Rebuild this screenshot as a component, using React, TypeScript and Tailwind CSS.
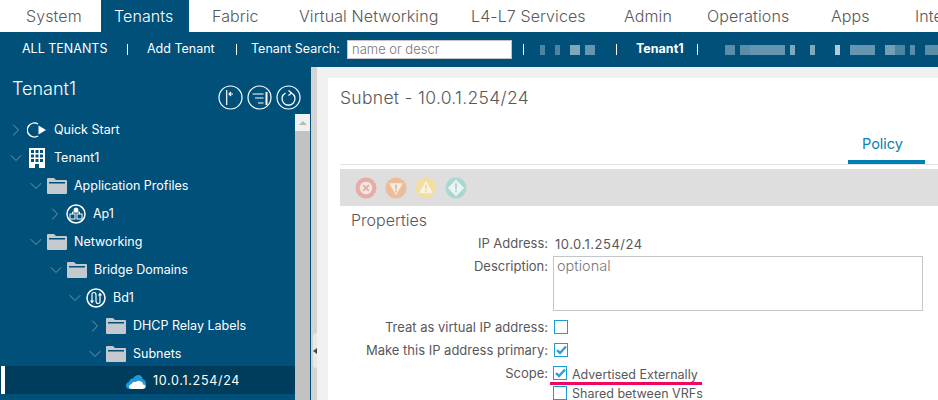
import { ChevronDown, ChevronRight } from 'lucide-react';
import type { ReactNode } from 'react';

const NAV = [
  { label: 'System', w: 'w-[101px] pl-[26px]' },
  { label: 'Tenants', w: 'w-[88px] pl-[13px]', active: true },
  { label: 'Fabric', w: 'w-[110px] pl-[23px]' },
  { label: 'Virtual Networking', w: 'w-[172px]' },
  { label: 'L4-L7 Services', w: 'w-[153px]' },
  { label: 'Admin', w: 'w-[83px]' },
  { label: 'Operations', w: 'w-[124px]' },
  { label: 'Apps', w: 'w-[84px]' },
  { label: 'Integrations', w: 'w-[100px]' },
];

const BLUR_A = [
  [5, 0.3], [10, 0], [5, 0.3], [10, 0], [10, 0.5], [5, 0], [10, 0.4],
];
const BLUR_B = [
  [10, 0.35], [5, 0], [10, 0.35], [15, 0.4], [20, 0.4], [5, 0], [5, 0.5], [15, 0], [5, 0.5], [20, 0], [5, 0.7], [10, 0], [25, 0.4], [10, 0], [10, 0.45], [10, 0.3], [5, 0], [5, 0.35], [10, 0], [13, 0.35],
];

function Blur({ cells }: { cells: number[][] }) {
  return (
    <div className="flex h-[10px] items-stretch">
      {cells.map(([w, o], i) => (
        <div key={i} className="shrink-0 bg-white" style={{ width: w, opacity: o }} />
      ))}
    </div>
  );
}

function Folder() {
  return (
    <svg width="20" height="16" viewBox="0 0 20 16" className="shrink-0">
      <path d="M0 2 V1 Q0 0 1 0 H7 L9 2 H19 Q20 2 20 3 V15 Q20 16 19 16 H1 Q0 16 0 15 Z" fill="#c4c9cd" />
      <rect x="2" y="4" width="16" height="1.5" fill="#00507a" />
    </svg>
  );
}

function Row({ indent, open, icon, label, selected }: { indent: number; open?: boolean; icon: ReactNode; label: string; selected?: boolean }) {
  return (
    <div className={`flex h-[28px] items-center ${selected ? '-mt-[2px] bg-[#003d5c] pt-[3px]' : ''}`} style={{ paddingLeft: selected ? 1 : indent }}>
      {selected && <span className="-mt-[3px] mr-[103px] h-[28px] w-[4px] shrink-0 bg-white" />}
      <span className="flex w-[14px] shrink-0 justify-center text-[#8aa5b5]">
        {open === undefined ? null : open ? <ChevronDown size={20} strokeWidth={1} className="shrink-0" /> : <ChevronRight size={20} strokeWidth={1} className="shrink-0" />}
      </span>
      <span className="ml-[4px] flex w-[20px] shrink-0 items-center justify-center">{icon}</span>
      <span className={`ml-[7px] whitespace-nowrap text-[12.5px] text-white ${selected ? 'tracking-[0.7px]' : ''}`}>{label}</span>
    </div>
  );
}

function CircleBtn({ children }: { children: ReactNode }) {
  return (
    <svg width="25" height="25" viewBox="0 0 25 25" fill="none" stroke="white" strokeWidth="1.2">
      <circle cx="12.5" cy="12.5" r="11.5" />
      {children}
    </svg>
  );
}

function Box({ checked, className = '' }: { checked?: boolean; className?: string }) {
  return (
    <span className={`flex h-[14px] w-[14px] shrink-0 items-center justify-center border-[1.5px] border-[#1a9cd8] bg-white ${className}`}>
      {checked && (
        <svg width="11" height="10" viewBox="0 0 11 10" fill="none">
          <path d="M1 5.2 L4 8 L10 1.5" stroke="#2f9fd8" strokeWidth="2.4" />
        </svg>
      )}
    </span>
  );
}

function Field({ label, children, className = 'h-[23px] items-center', labelClass = '' }: { label: string; children?: ReactNode; className?: string; labelClass?: string }) {
  return (
    <div className={`flex ${className}`}>
      <div className={`w-[208px] shrink-0 text-right text-[13px] leading-[14px] text-[#58585b] ${labelClass}`}>{label}</div>
      <div className="ml-[5px] flex-1">{children}</div>
    </div>
  );
}

export default function App() {
  return (
    <div className="flex h-[400px] w-[938px] flex-col overflow-hidden bg-white font-['Inter','Liberation_Sans',sans-serif]">
      {/* Top nav */}
      <div className="flex h-[32px] shrink-0 text-[16px] font-light tracking-[0.1px] text-[#58585b]">
        {NAV.map(n => (
          <div key={n.label} className={`flex shrink-0 items-center whitespace-nowrap ${n.w} ${n.active ? 'bg-[#00507a] text-white' : ''}`}>
            {n.label}
          </div>
        ))}
      </div>

      {/* Sub nav */}
      <div className="flex h-[35px] shrink-0 items-center overflow-hidden whitespace-nowrap bg-[#00507a] pl-[22px] text-[12.5px] text-white">
        <span className="w-[85px] shrink-0">ALL TENANTS</span>
        <span className="ml-[20px] h-[11px] w-px shrink-0 bg-white" />
        <span className="ml-[19px] w-[69px] shrink-0">Add Tenant</span>
        <span className="ml-[20px] h-[11px] w-px shrink-0 bg-white" />
        <span className="ml-[14px] w-[89px] shrink-0">Tenant Search:</span>
        <div className="ml-[7px] flex h-[19px] w-[165px] shrink-0 items-center border border-[#c5c5c5] bg-white px-1 text-[13px] font-light text-[#77787b]">name or descr</div>
        <span className="ml-[11px] h-[11px] w-px shrink-0 bg-white" />
        <div className="ml-[16px]"><Blur cells={BLUR_A} /></div>
        <span className="ml-[21px] h-[11px] w-px shrink-0 bg-white" />
        <span className="ml-[19px] w-[50px] shrink-0 font-bold">Tenant1</span>
        <span className="ml-[11px] h-[11px] w-px shrink-0 bg-white" />
        <div className="ml-[27px]"><Blur cells={BLUR_B} /></div>
      </div>

      <div className="flex min-h-0 flex-1">
        {/* Sidebar */}
        <div className="flex w-[311px] shrink-0 flex-col bg-[#00507a]">
          <div className="flex h-[47px] shrink-0 items-start justify-between pr-[10px] pl-[12px]">
            <span className="mt-[8px] text-[18px] font-light text-white">Tenant1</span>
            <div className="mt-[18px] flex gap-[4px]">
              <CircleBtn><path d="M8.7 5 V20 M11 9 H15 M13 7 L11 9 L13 11" /></CircleBtn>
              <CircleBtn><path d="M5.5 9 H16.5 M8 13 H16.5 M11 18 H16.5" /><path d="M19.5 7 V20" strokeWidth="2" /></CircleBtn>
              <CircleBtn><path d="M15.5 8 A6.5 6.5 0 1 1 9.5 8 M12.5 5.5 L15.5 8 L12.5 10.5" strokeWidth="1.3" /></CircleBtn>
            </div>
          </div>
          <div className="flex min-h-0 flex-1">
            <div className="w-[295px] shrink-0 pt-[2px]">
              <Row indent={9} open={false} label="Quick Start" icon={
                <svg width="20" height="18" viewBox="0 0 20 18" fill="none"><path d="M11 3 A7 7 0 1 0 11 15" stroke="white" strokeWidth="1.4" /><path d="M11.5 4.5 L19 9 L11.5 13.5 Z" fill="white" /></svg>
              } />
              <Row indent={9} open label="Tenant1" icon={
                <svg width="18" height="20" viewBox="0 0 18 20" fill="white"><path fillRule="evenodd" d="M1 0 H17 V20 H11 V16 H7 V20 H1 Z M3 2 V5 H6 V2 Z M7.5 2 V5 H10.5 V2 Z M12 2 V5 H15 V2 Z M3 6.5 V9.5 H6 V6.5 Z M7.5 6.5 V9.5 H10.5 V6.5 Z M12 6.5 V9.5 H15 V6.5 Z M3 11 V14 H6 V11 Z M7.5 11 V14 H10.5 V11 Z M12 11 V14 H15 V11 Z" /></svg>
              } />
              <Row indent={29} open label="Application Profiles" icon={<Folder />} />
              <Row indent={48} open={false} label="Ap1" icon={
                <svg width="20" height="20" viewBox="0 0 20 20" fill="none" stroke="white" strokeWidth="1"><circle cx="10" cy="10" r="9" strokeWidth="1.5" /><circle cx="10" cy="6" r="2" fill="white" /><rect x="4" y="10" width="5" height="5" /><rect x="11" y="10" width="5" height="5" /><path d="M6.5 10 V8 H13.5 V10" /></svg>
              } />
              <Row indent={29} open label="Networking" icon={<Folder />} />
              <Row indent={49} open label="Bridge Domains" icon={<Folder />} />
              <Row indent={68} open label="Bd1" icon={
                <svg width="20" height="20" viewBox="0 0 20 20" fill="none" stroke="white" strokeWidth="1.2"><circle cx="10" cy="10" r="9" strokeWidth="1.5" /><path d="M6 6 V14 M4.5 12.5 L6 14.5 L7.5 12.5 M6 6 Q6 4.5 8 4.5 Q10 4.5 10 7 V13 Q10 15.5 12 15.5 Q14 15.5 14 14 V6 M12.5 7.5 L14 5.5 L15.5 7.5" /></svg>
              } />
              <Row indent={88} open={false} label="DHCP Relay Labels" icon={<Folder />} />
              <Row indent={88} open label="Subnets" icon={<Folder />} />
              <Row indent={108} selected label="10.0.1.254/24" icon={
                <svg width="20" height="14" viewBox="0 0 20 14"><path d="M4 14 Q0 14 0 10.5 Q0 8 3 7 Q4 3 7 3.5 Q9 0 12.5 0 Q16 0 16.5 4 Q20 5 20 9 V11 Q20 14 16 14 Z" fill="#1e9ad6" /><path d="M5.5 14 Q3 14 3 11.5 Q3 9.5 5.5 9 Q7 6 10 7 Q12 5 15 6.5 Q17 7 17 9.5 Q20 10 19.5 12 Q19 14 16 14 Z" fill="white" /></svg>
              } />
            </div>
            {/* Scrollbar */}
            <div className="flex w-[15px] shrink-0 flex-col bg-[#c2c2c2]">
              <div className="flex h-[17px] items-center justify-center bg-[#f1f1f1]">
                <span className="h-0 w-0 border-x-[4px] border-b-[4px] border-x-transparent border-b-[#b8b8b8]" />
              </div>
            </div>
          </div>
        </div>

        {/* Resizer */}
        <div className="relative w-[6px] shrink-0 bg-[#d4d4d4]">
          <div className="absolute top-[266px] left-[2px] flex h-[35px] w-[4px] items-center rounded-l-sm bg-[#e8e8e8]">
            <span className="h-0 w-0 border-y-[3px] border-r-[4px] border-y-transparent border-r-[#444]" />
          </div>
        </div>

        {/* Main */}
        <div className="min-w-0 flex-1 bg-[#f1f1f1] pt-[11px] pl-[11px]">
          <div className="h-full bg-white pl-[12px]">
            <div className="pt-[7px] text-[17.5px] leading-[26px] font-light tracking-[0.3px] text-[#58585b]">Subnet - 10.0.1.254/24</div>
            <div className="mt-[17px] flex h-[37px] justify-end border-b border-[#e2e2e2] pr-[13px]">
              <div className="flex h-[36px] w-[77px] items-center justify-center border-b-4 border-[#0080b2] pr-2 text-[14.5px] text-[#0a7fb0]">Policy</div>
            </div>
            <div className="mt-[4px] flex h-[37px] items-center gap-[8px] bg-[#dedede] pl-[15px]">
              <svg width="22" height="22" viewBox="0 0 23 23"><circle cx="11.5" cy="11.5" r="11" fill="#e6ada4" /><circle cx="11.5" cy="11.5" r="6.5" fill="#f0e8e6" /><path d="M8.5 8.5 L14.5 14.5 M14.5 8.5 L8.5 14.5" stroke="#e6ada4" strokeWidth="2" /></svg>
              <svg width="22" height="22" viewBox="0 0 23 23"><circle cx="11.5" cy="11.5" r="11" fill="#ecbd98" /><path d="M4.5 6.5 H18.5 L11.5 19 Z" fill="#f5eee8" /><rect x="10.5" y="8" width="2" height="5" fill="#ecbd98" /><rect x="10.5" y="14" width="2" height="2" fill="#ecbd98" /></svg>
              <svg width="22" height="22" viewBox="0 0 23 23"><circle cx="11.5" cy="11.5" r="11" fill="#f1dea0" /><path d="M11.5 4 L19 17 H4 Z" fill="#f7f3e6" /><rect x="10.5" y="8" width="2" height="5" fill="#f1dea0" /><rect x="10.5" y="14" width="2" height="2" fill="#f1dea0" /></svg>
              <svg width="22" height="22" viewBox="0 0 23 23"><circle cx="11.5" cy="11.5" r="11" fill="#a9d8d2" /><path d="M11.5 3 L20 11.5 L11.5 20 L3 11.5 Z" fill="#eef3f2" /><rect x="10.5" y="6.5" width="2" height="6.5" fill="#a9d8d2" /><rect x="10.5" y="14" width="2" height="2" fill="#a9d8d2" /></svg>
            </div>
            <div className="mt-[2px] pl-[11px] text-[16px] leading-[24px] font-light text-[#58585b]">Properties</div>
            <div className="flex flex-col">
              <Field label="IP Address:" className="h-[22px] items-center"><span className="ml-[2px] text-[13px] tracking-[0.5px] text-[#58585b]">10.0.1.254/24</span></Field>
              <Field label="Description:" className="mt-[2px] h-[55px] items-start" labelClass="pt-[3px]">
                <div className="h-[55px] w-[370px] border border-[#c5c5c5] px-[3px] text-[14.5px] leading-[18px] font-light text-[#77787b]">optional</div>
              </Field>
              <div className="mt-[4px]" />
              <Field label="Treat as virtual IP address:"><Box className="ml-px" /></Field>
              <Field label="Make this IP address primary:"><Box checked className="ml-px" /></Field>
              <Field label="Scope:" className="h-[21px] items-start pt-[5px]">
                <div className="flex items-start gap-[5px]"><Box checked /><span className="mt-[2px] text-[12.5px] leading-[14px] text-[#58585b]">Advertised Externally</span></div>
              </Field>
              <div className="ml-[210px] h-[3px] w-[152px] bg-[#f0055f]" />
              <Field label="" className="mt-px h-[15px] items-start">
                <div className="flex items-start gap-[5px]"><Box /><span className="mt-px text-[12.5px] leading-[14px] text-[#58585b]">Shared between VRFs</span></div>
              </Field>
            </div>
          </div>
        </div>
      </div>
    </div>
  );
}
